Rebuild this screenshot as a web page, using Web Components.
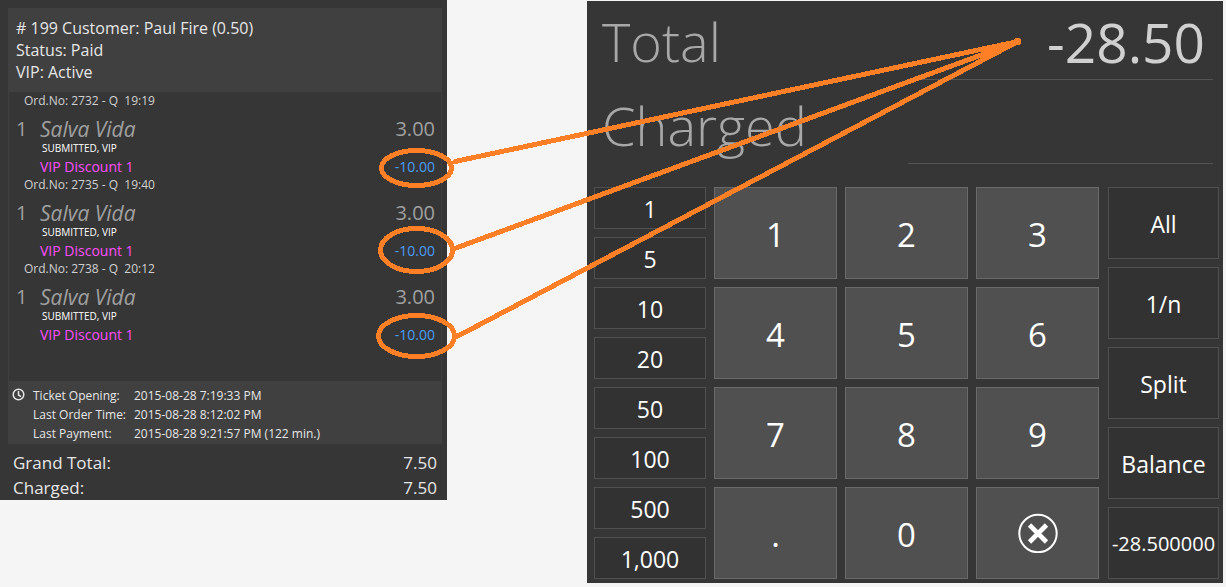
<!DOCTYPE html>
<html lang="en">
<head>
<meta charset="utf-8">
<meta name="viewport" content="width=device-width, initial-scale=1">
<title>Ticket payment</title>
<style>
  html, body { margin: 0; }
  body {
    background: #f5f5f5;
    color: #e6e6e6;
    font-family: "Open Sans", "Noto Sans", sans-serif;
    font-size: 15px;
  }
</style>
</head>
<body>
<payment-screen>
  <ticket-panel slot="ticket">
    <span slot="customer"># 199 Customer: Paul Fire (0.50)</span>
    <span slot="status">Status: Paid</span>
    <span slot="vip">VIP: Active</span>
    <ticket-order number="2732" time="19:19"></ticket-order>
    <ticket-order number="2735" time="19:40"></ticket-order>
    <ticket-order number="2738" time="20:12"></ticket-order>
    <ticket-times slot="times"></ticket-times>
    <total-line slot="totals" label="Grand Total:" value="7.50"></total-line>
    <total-line slot="totals" label="Charged:" value="7.50"></total-line>
  </ticket-panel>
  <tender-panel slot="tender"></tender-panel>
</payment-screen>

<script>
  const define = (name, html, setup) => {
    const template = document.createElement('template');
    template.innerHTML = html;
    customElements.define(name, class extends HTMLElement {
      constructor() {
        super();
        this.attachShadow({ mode: 'open' }).append(template.content.cloneNode(true));
      }
      connectedCallback() {
        if (setup) setup(this, this.shadowRoot);
      }
    });
  };

  define('discount-links', `
    <style>
      :host { display: block; position: absolute; inset: 0; pointer-events: none; }
      svg { display: block; width: 100%; height: 100%; }
    </style>
    <svg viewBox="0 0 1226 583" preserveAspectRatio="none" fill="none" stroke="#ff7f27"
         stroke-width="5" stroke-linecap="round" shape-rendering="crispEdges" aria-hidden="true">
      <ellipse cx="416.5" cy="168" rx="35" ry="17.5"/>
      <ellipse cx="416.5" cy="250" rx="36" ry="21.5"/>
      <ellipse cx="416.5" cy="336" rx="38" ry="20.5"/>
      <path d="M455 161.5 L1018 41.5 M456 248 L1018 41.5 M458 336 L1018 41.5"/>
      <circle cx="1017.5" cy="41.5" r="1.5" fill="#ff7f27"/>
    </svg>`);

  define('payment-screen', `
    <style>
      :host {
        display: grid;
        position: relative;
        grid-template-columns: minmax(0, 447fr) minmax(0, 636fr);
        column-gap: 140px;
        align-items: start;
        padding-right: 3px;
      }
    </style>
    <slot name="ticket"></slot>
    <slot name="tender"></slot>
    <discount-links></discount-links>`);

  define('ticket-panel', `
    <style>
      :host { display: block; background: #363636; padding: 8px 5px 0 8px; }
      header {
        display: flex; flex-direction: column;
        background: #404040; padding: 9px 8px 8px;
        font-size: 16px; line-height: 22px;
      }
      .orders {
        border: 1px solid #404040; border-bottom: 0;
        padding: 1px 6px 36px 7px;
      }
      .times { background: #404040; padding: 5px 4px 1px; }
      .totals { padding: 6px 5px 0; font-size: 17px; line-height: 25px; }
    </style>
    <header><slot name="customer"></slot><slot name="status"></slot><slot name="vip"></slot></header>
    <div class="orders"><slot></slot></div>
    <div class="times"><slot name="times"></slot></div>
    <div class="totals"><slot name="totals"></slot></div>`);

  define('ticket-order', `
    <style>
      :host { display: block; padding-bottom: 1px; }
      .no { font-size: 12px; line-height: 16px; padding-left: 8px; color: #d0d0d0; white-space: pre; }
      .row { display: grid; grid-template-columns: 24px 1fr auto; }
      .item { margin-top: 6px; font-size: 20px; line-height: 28px; color: #a0a0a0; }
      .item i { font-size: 21px; }
      .state { padding-left: 26px; font-size: 10px; line-height: 10px; color: #fff; }
      .discount { margin-top: 4px; font-size: 14px; line-height: 19px; color: #ff4dff; }
      .discount span { grid-column: 2; }
      .discount data { color: #4a9df8; }
    </style>
    <div class="no"></div>
    <div class="row item"><span>1</span><i>Salva Vida</i><data value="3">3.00</data></div>
    <div class="state">SUBMITTED, VIP</div>
    <div class="row discount"><span>VIP Discount 1</span><data value="-10">-10.00</data></div>`,
    (host, root) => {
      root.querySelector('.no').textContent =
        'Ord.No: ' + host.getAttribute('number') + ' - Q  ' + host.getAttribute('time');
    });

  define('ticket-times', `
    <style>
      :host { display: flex; font-size: 12px; line-height: 19px; }
      svg { flex: none; width: 13px; height: 13px; margin: 2px 8px 0 0; }
      table { border-collapse: collapse; }
      th, td { padding: 0; text-align: left; font-weight: 400; white-space: nowrap; }
      th { width: 101px; }
    </style>
    <svg viewBox="0 0 13 13" fill="none" stroke="#e6e6e6" stroke-width="1.5" aria-hidden="true">
      <circle cx="6.5" cy="6.5" r="5.3"/>
      <path d="M6.5 3 V7 L9 8.6"/>
    </svg>
    <table>
      <tr><th scope="row">Ticket Opening:</th><td>2015-08-28 7:19:33 PM</td></tr>
      <tr><th scope="row">Last Order Time:</th><td>2015-08-28 8:12:02 PM</td></tr>
      <tr><th scope="row">Last Payment:</th><td>2015-08-28 9:21:57 PM (122 min.)</td></tr>
    </table>`);

  define('total-line', `
    <style>:host { display: flex; justify-content: space-between; }</style>
    <span></span><data></data>`,
    (host, root) => {
      root.querySelector('span').textContent = host.getAttribute('label');
      root.querySelector('data').textContent = host.getAttribute('value');
    });

  define('amount-field', `
    <style>
      :host { display: grid; grid-template-columns: repeat(2, minmax(0, 1fr)); height: 79px; }
      label { font-size: 54px; font-weight: 300; line-height: 80px; color: #a8a8a8; }
      input {
        box-sizing: border-box; width: 100%; height: 79px; margin: 0; padding: 2px 8px 0 0;
        border: 0; border-bottom: 1px solid #545454; border-radius: 0; outline: 0;
        background: none; color: #d0d0d0; font: inherit; font-size: 55px; text-align: right;
      }
    </style>
    <label for="amount"></label><input id="amount" type="text" readonly>`,
    (host, root) => {
      root.querySelector('label').textContent = host.getAttribute('label');
      root.querySelector('input').value = host.getAttribute('value') || '';
    });

  define('pad-key', `
    <style>
      :host { display: flex; min-width: 0; }
      button {
        flex: 1; min-width: 0; height: 42px; margin: 0; padding: 2px 0 0;
        display: flex; align-items: center; justify-content: center;
        border: 1px solid #505050; border-radius: 0; background: #323232;
        color: #fff; font: inherit; font-size: 23px; line-height: 32px;
      }
      :host([kind="digit"]) button {
        height: 92px; padding-top: 4px;
        border-color: #6a6a6a; background: #505050; font-size: 33px;
      }
      :host([kind="action"]) button { height: 72px; }
      :host([compact]) button { font-size: 20px; }
      :host([icon]) button { padding-top: 0; }
    </style>
    <button type="button"><slot></slot></button>`);

  define('tender-panel', `
    <style>
      :host { display: block; margin-top: 1px; background: #363636; padding-bottom: 4px; }
      .amounts { display: grid; grid-template-columns: minmax(0, 1fr); row-gap: 5px; padding: 0 10px 0 15px; }
      .keys {
        display: grid; grid-template-columns: 112fr 386fr 111fr;
        gap: 8px; margin-top: 23px; padding: 0 4px 0 7px;
      }
      .column { display: grid; gap: 8px; align-content: start; min-width: 0; }
      .digits { grid-template-columns: repeat(3, minmax(0, 1fr)); padding-right: 1px; }
      svg { display: block; width: 40px; height: 40px; }
    </style>
    <div class="amounts">
      <amount-field label="Total" value="-28.50"></amount-field>
      <amount-field label="Charged"></amount-field>
    </div>
    <div class="keys">
      <div class="column">
        <pad-key>1</pad-key><pad-key>5</pad-key><pad-key>10</pad-key><pad-key>20</pad-key>
        <pad-key>50</pad-key><pad-key>100</pad-key><pad-key>500</pad-key><pad-key>1,000</pad-key>
      </div>
      <div class="column digits">
        <pad-key kind="digit">1</pad-key><pad-key kind="digit">2</pad-key><pad-key kind="digit">3</pad-key>
        <pad-key kind="digit">4</pad-key><pad-key kind="digit">5</pad-key><pad-key kind="digit">6</pad-key>
        <pad-key kind="digit">7</pad-key><pad-key kind="digit">8</pad-key><pad-key kind="digit">9</pad-key>
        <pad-key kind="digit">.</pad-key><pad-key kind="digit">0</pad-key>
        <pad-key kind="digit" icon>
          <svg viewBox="0 0 40 40" fill="none" stroke="#fff" role="img" aria-label="Clear">
            <circle cx="20" cy="20.5" r="18.7" stroke-width="2"/>
            <path d="M11.5 12 L28.5 29 M28.5 12 L11.5 29" stroke-width="4.6"/>
          </svg>
        </pad-key>
      </div>
      <div class="column">
        <pad-key kind="action">All</pad-key><pad-key kind="action">1/n</pad-key>
        <pad-key kind="action">Split</pad-key><pad-key kind="action">Balance</pad-key>
        <pad-key kind="action" compact>-28.500000</pad-key>
      </div>
    </div>`);
</script>
</body>
</html>
